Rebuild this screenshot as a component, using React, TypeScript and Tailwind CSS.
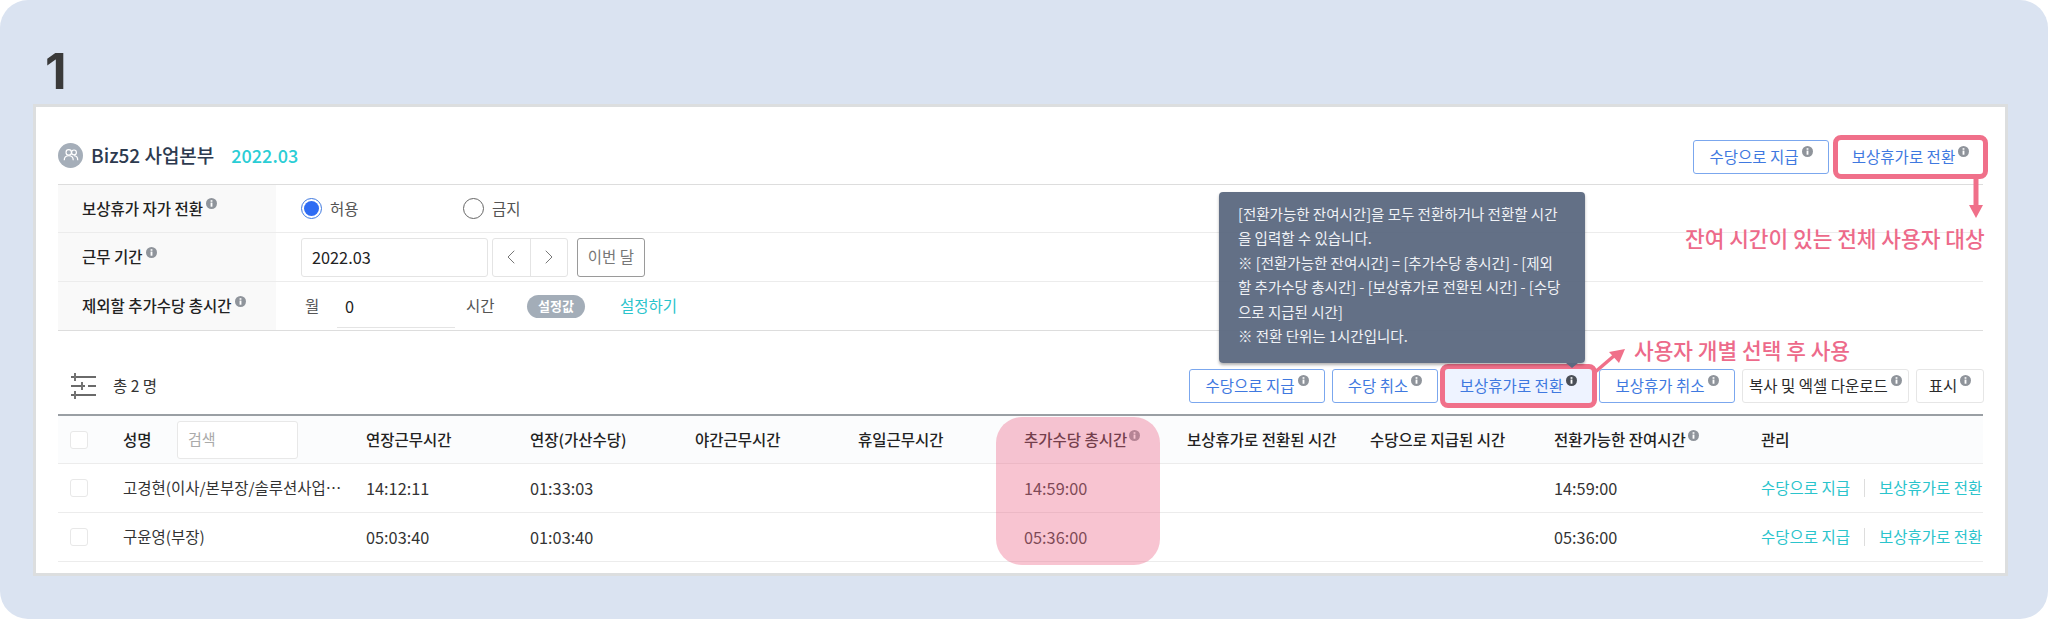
import React from 'react';
import { ChevronLeft, ChevronRight } from 'lucide-react';

const gridCols = 'grid grid-cols-[65px_243px_164px_165px_163px_166px_163px_183px_184px_207px_222px]';

const Info: React.FC<{ className?: string; dark?: boolean }> = ({ className = 'ml-[3px] -mt-[11px]', dark }) => (
  <svg viewBox="0 0 12 12" className={`inline-block w-[11px] h-[11px] shrink-0 ${className}`}>
    <circle cx="6" cy="6" r="6" fill={dark ? '#4a4f57' : '#8f949b'} />
    <rect x="5" y="5" width="2" height="4.5" fill="#fff" />
    <rect x="5" y="2.4" width="2" height="1.7" fill="#fff" />
  </svg>
);

const Btn: React.FC<{ label: string; w: string; tone?: 'blue' | 'gray'; hot?: boolean; dark?: boolean }> = ({ label, w, tone = 'blue', hot, dark }) => (
  <button
    className={`${w} h-[34px] flex items-center justify-center rounded-[3px] border text-[15.5px] whitespace-nowrap ${
      tone === 'blue' ? 'border-[#7ba7ee] text-[#3f79e0]' : 'border-[#e6e6e6] text-[#2b2b2b]'
    } ${hot ? 'outline-[5px] outline-[#f0708a] rounded-[2px] border-transparent' : ''}`}
  >
    {label}
    <Info dark={dark} />
  </button>
);

const FormRow: React.FC<{ label: string; children: React.ReactNode; className?: string }> = ({ label, children, className = 'h-[49px]' }) => (
  <div className={`flex border-b border-[#ececec] ${className}`}>
    <div className="w-[218px] shrink-0 bg-[#f9f9f9] pl-[24px] flex items-center text-[15.5px] font-medium text-[#222]">
      {label}
      <Info className="ml-[3px] -mt-[10px]" />
    </div>
    <div className="flex items-center pl-[25px] text-[15.5px] text-[#555]">{children}</div>
  </div>
);

const Check = () => <div className="w-[18px] h-[18px] ml-[12px] rounded-[3px] border border-[#e8e8e8] bg-white" />;

const rows = [
  { name: '고경현(이사/본부장/솔루션사업본부)', a: '14:12:11', b: '01:33:03', t: '14:59:00', r: '14:59:00' },
  { name: '구윤영(부장)', a: '05:03:40', b: '01:03:40', t: '05:36:00', r: '05:36:00' },
];

const headers = ['연장근무시간', '연장(가산수당)', '야간근무시간', '휴일근무시간', '추가수당 총시간', '보상휴가로 전환된 시간', '수당으로 지급된 시간', '전환가능한 잔여시간', '관리'];

export default function App() {
  return (
    <div className="w-[2048px] h-[619px] bg-white font-['Noto_Sans_CJK_KR','Noto_Sans',sans-serif] overflow-hidden">
      <div className="h-full rounded-[28px] bg-[#dae3f1] pl-[36px] pr-[43px]">
        <div className="h-[107px] pt-[47px] pl-[9px] text-[50px] leading-[48px] font-bold text-[#3a3a3a] font-['Inter',sans-serif]">1</div>

        <div className="relative h-[466px] bg-white px-[22px] shadow-[0_0_0_3px_#dcdedf]">
          {/* Title */}
          <div className="h-[78px] pt-[33px] flex justify-between border-b border-[#dddddd]">
            <div className="flex items-center h-[30px]">
              <div className="w-[25px] h-[25px] rounded-full bg-[#a5aeb9] flex items-center justify-center">
                <svg viewBox="0 0 24 24" className="w-[18px] h-[18px]" fill="none" stroke="#fff" strokeWidth="1.6">
                  <circle cx="9" cy="8.5" r="3.6" />
                  <circle cx="16" cy="8.5" r="3.2" />
                  <path d="M3 19c0-4 2.5-6 6-6s6 2 6 6M16 13c3 0 5 2 5 6" />
                </svg>
              </div>
              <span className="ml-[8px] text-[19px] font-medium text-[#2d3a4f]">Biz52 사업본부</span>
              <span className="ml-[17px] text-[18px] font-medium text-[#2acdd5]">2022.03</span>
            </div>
            <div className="flex gap-[9px]">
              <Btn label="수당으로 지급" w="w-[136px]" />
              <Btn label="보상휴가로 전환" w="w-[145px]" hot />
            </div>
          </div>

          {/* Settings */}
          <FormRow label="보상휴가 자가 전환" className="h-[48px]">
            <span className="w-[21px] h-[21px] rounded-full border border-[#3f79e0] flex items-center justify-center">
              <span className="w-[15px] h-[15px] rounded-full bg-[#2f6cf3]" />
            </span>
            <span className="ml-[8px] w-[133px]">허용</span>
            <span className="w-[21px] h-[21px] rounded-full border border-[#666]" />
            <span className="ml-[8px]">금지</span>
          </FormRow>
          <FormRow label="근무 기간">
            <div className="w-[187px] h-[39px] rounded-[3px] border border-[#e4e4e4] flex items-center pl-[10px] text-[16.3px] text-[#222]">2022.03</div>
            <div className="ml-[4px] w-[76px] h-[39px] rounded-[3px] border border-[#e4e4e4] flex text-[#777]">
              <div className="flex-1 border-r border-[#e4e4e4] flex items-center justify-center">
                <ChevronLeft size={24} strokeWidth={1} />
              </div>
              <div className="flex-1 flex items-center justify-center">
                <ChevronRight size={24} strokeWidth={1} />
              </div>
            </div>
            <div className="ml-[9px] w-[68px] h-[39px] rounded-[3px] border border-[#9a9a9a] flex items-center justify-center text-[#777]">이번 달</div>
          </FormRow>
          <FormRow label="제외할 추가수당 총시간" className="h-[49px] !border-[#dddddd]">
            <span className="ml-[4px] w-[32px]">월</span>
            <div className="w-[118px] h-[42px] mt-[2px] border-b border-[#e4e4e4] flex items-center pl-[8px] text-[16.3px] text-[#222]">0</div>
            <span className="ml-[11px] w-[61px]">시간</span>
            <span className="w-[58px] h-[23px] rounded-full bg-[#a3adb8] flex items-center justify-center text-[13px] font-bold text-white">설정값</span>
            <span className="ml-[35px] text-[#2bc4cc]">설정하기</span>
          </FormRow>

          {/* Toolbar */}
          <div className="h-[83px] pb-[11px] flex items-end justify-between">
            <div className="flex items-center pl-[13px] mb-[4px]">
              <svg viewBox="0 0 26 26" className="w-[26px] h-[26px]" stroke="#3a3a3a" strokeWidth="1.4" fill="none">
                <path d="M0 4h3M5 4h20M4 0v8" />
                <path d="M0 13h10M12 13h2M17 13h8M11 9v8" />
                <path d="M0 22h3M5 22h20M4 18v8" />
              </svg>
              <span className="ml-[16px] text-[15.5px] text-[#333]">총 2 명</span>
            </div>
            <div className="flex gap-[7px] -mr-[1px]">
              <Btn label="수당으로 지급" w="w-[136px]" />
              <Btn label="수당 취소" w="w-[106px]" />
              <div className="w-[147px] bg-[#eef3ff] rounded-[2px]">
                <Btn label="보상휴가로 전환" w="w-[147px]" hot dark />
              </div>
              <Btn label="보상휴가 취소" w="w-[136px]" />
              <Btn label="복사 및 엑셀 다운로드" w="w-[167px]" tone="gray" />
              <Btn label="표시" w="w-[68px]" tone="gray" />
            </div>
          </div>

          {/* Table */}
          <div className="border-t-2 border-[#9a9fa4]">
            <div className={`${gridCols} h-[48px] items-center bg-[#fbfcfd] border-b border-[#ececec] text-[15.5px] font-medium text-[#222]`}>
              <Check />
              <div className="flex items-center">
                <span className="w-[54px]">성명</span>
                <div className="w-[121px] h-[38px] rounded-[3px] border border-[#e8e8e8] bg-white flex items-center pl-[10px] text-[15px] font-normal text-[#aaa]">검색</div>
              </div>
              {headers.map((h) => (
                <div key={h} className="flex items-center whitespace-nowrap">
                  {h}
                  {(h === '추가수당 총시간' || h === '전환가능한 잔여시간') && <Info className="ml-[2px] -mt-[8px]" />}
                </div>
              ))}
            </div>
            {rows.map((r) => (
              <div key={r.name} className={`${gridCols} h-[49px] items-center border-b border-[#ececec] text-[15.5px] text-[#333]`}>
                <Check />
                <div className="w-[222px] truncate">{r.name}</div>
                <div className="text-[16.3px]">{r.a}</div>
                <div className="text-[16.3px]">{r.b}</div>
                <div />
                <div />
                <div className="text-[16.3px]">{r.t}</div>
                <div />
                <div />
                <div className="text-[16.3px]">{r.r}</div>
                <div className="flex items-center text-[#2bc4cc] whitespace-nowrap">
                  수당으로 지급
                  <span className="mx-[14px] w-[1px] h-[18px] bg-[#dddddd]" />
                  보상휴가로 전환
                </div>
              </div>
            ))}
          </div>

          {/* Pink column highlight */}
          <div className="absolute left-[960px] top-[310px] w-[164px] h-[148px] rounded-[26px] bg-[#ee6c8c]/40" />

          {/* Tooltip */}
          <div className="absolute left-[1183px] top-[85px] w-[366px] h-[171px] rounded-[4px] bg-[#5b6880]/95 pl-[19px] pt-[10px] text-[14.5px] leading-[24.4px] text-[#f0f2f6] whitespace-nowrap shadow-[0_2px_3px_rgba(0,0,0,0.3)]">
            <div>[전환가능한 잔여시간]을 모두 전환하거나 전환할 시간</div>
            <div>을 입력할 수 있습니다.</div>
            <div>※ [전환가능한 잔여시간] = [추가수당 총시간] - [제외</div>
            <div>할 추가수당 총시간] - [보상휴가로 전환된 시간] - [수당</div>
            <div>으로 지급된 시간]</div>
            <div>※ 전환 단위는 1시간입니다.</div>
            <div className="absolute left-[347px] top-[171px] border-x-[6px] border-x-transparent border-t-[5px] border-t-[#5b6880]" />
          </div>

          {/* Annotations */}
          <svg className="absolute left-[1930px] top-[70px] w-[20px] h-[45px]" viewBox="0 0 20 45">
            <path d="M7.5 0h5v30h-5z" fill="#f0708a" />
            <path d="M3 28h14l-7 13z" fill="#f0708a" />
          </svg>
          <div className="absolute left-[1649px] top-[116px] text-[21.4px] leading-[30px] font-medium text-[#ed6a8a] whitespace-nowrap">잔여 시간이 있는 전체 사용자 대상</div>
          <svg className="absolute left-[1555px] top-[238px] w-[38px] h-[32px]" viewBox="0 0 38 32">
            <path d="M3 28 L24 10" stroke="#f0708a" strokeWidth="3.5" />
            <path d="M34 4 L18 7 L28 18 Z" fill="#f0708a" />
          </svg>
          <div className="absolute left-[1598px] top-[228px] text-[21.4px] leading-[30px] font-medium text-[#ed6a8a] whitespace-nowrap">사용자 개별 선택 후 사용</div>
        </div>
      </div>
    </div>
  );
}
